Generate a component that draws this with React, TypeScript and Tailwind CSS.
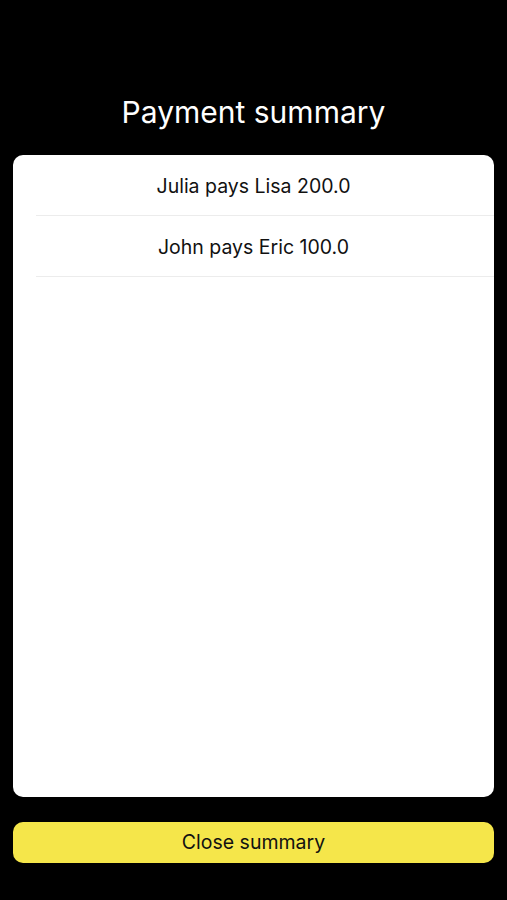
export default function App() {
  const payments = ["Julia pays Lisa 200.0", "John pays Eric 100.0"];

  return (
    <div
      className="h-[900px] bg-black flex flex-col px-[13px]"
      style={{ fontFamily: "Inter, 'Noto Sans', sans-serif" }}
    >
      <h1 className="mt-[92px] h-[40px] leading-[40px] text-center text-white text-[30px]">
        Payment summary
      </h1>
      <div className="mt-[23px] h-[642px] bg-white rounded-[10px] overflow-hidden">
        {payments.map((p) => (
          <div key={p} className="pl-[23px]">
            <div className="h-[61px] pt-[3px] flex items-center justify-center border-b border-[#ececec] pr-[23px] text-[19.5px] text-[#111]">
              {p}
            </div>
          </div>
        ))}
      </div>
      <button className="mt-[25px] h-[41px] pt-[1px] w-full rounded-[10px] bg-[#f5e64a] text-[19.5px] text-[#111]">
        Close summary
      </button>
    </div>
  );
}
